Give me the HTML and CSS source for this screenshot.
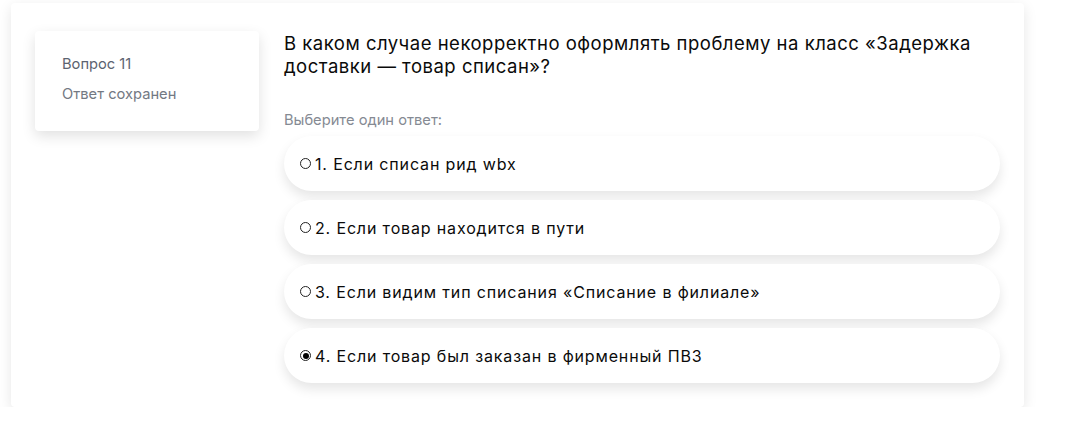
FILE: index.html
```html
<!DOCTYPE html>
<html lang="ru">
<head>
<meta charset="utf-8">
<link rel="stylesheet" href="styles.css">
</head>
<body>
<div class="page">
  <div class="card">
    <div class="info">
      <div class="info-num">Вопрос 11</div>
      <div class="info-state">Ответ сохранен</div>
    </div>
    <div class="content">
      <div class="question">В каком случае некорректно оформлять проблему на класс «Задержка доставки — товар списан»?</div>
      <div class="prompt">Выберите один ответ:</div>
      <div class="options">
        <label class="option"><span class="radio"></span><span>1. Если списан рид wbx</span></label>
        <label class="option"><span class="radio"></span><span>2. Если товар находится в пути</span></label>
        <label class="option"><span class="radio"></span><span>3. Если видим тип списания «Списание в филиале»</span></label>
        <label class="option"><span class="radio checked"></span><span>4. Если товар был заказан в фирменный ПВЗ</span></label>
      </div>
    </div>
  </div>
</div>
</body>
</html>
```
FILE: styles.css
```css
html, body {
  margin: 0;
  padding: 0;
  background: #ffffff;
  font-family: Inter, "Noto Sans", sans-serif;
  color: #000;
}
.page {
  padding: 3px 64px 0 11px;
}
.card {
  width: 1013px;
  box-sizing: border-box;
  background: #fff;
  border-radius: 4px;
  box-shadow: 0 4px 14px rgba(0, 0, 0, 0.1);
  padding: 28px 24px 24px 24px;
  display: flex;
  align-items: flex-start;
  gap: 25px;
}
.info {
  flex: 0 0 224px;
  height: 100px;
  box-sizing: border-box;
  background: #fff;
  border-radius: 4px;
  box-shadow: 0 5px 14px rgba(0, 0, 0, 0.12);
  padding: 23px 27px;
  font-size: 14.7px;
  line-height: 20px;
}
.info-num {
  color: #5c6370;
}
.info-state {
  color: #737983;
  margin-top: 10px;
}
.content {
  flex: 1;
  min-width: 0;
}
.question {
  font-size: 18.5px;
  letter-spacing: 0.5px;
  line-height: 23px;
  padding-top: 1px;
  color: #0a0a0a;
}
.prompt {
  margin-top: 32px;
  font-size: 14.7px;
  line-height: 20px;
  color: #858a93;
}
.options {
  margin-top: 6px;
  display: flex;
  flex-direction: column;
  gap: 9px;
}
.option {
  height: 55px;
  border-radius: 28px;
  background: #fff;
  box-shadow: 0 6px 12px rgba(0, 0, 0, 0.1);
  display: flex;
  align-items: center;
  gap: 4px;
  padding-left: 16px;
  font-size: 16px;
  letter-spacing: 0.85px;
  color: #0a0a0a;
}
.radio {
  width: 11px;
  height: 11px;
  border: 1px solid #222;
  border-radius: 50%;
  box-sizing: border-box;
  flex: 0 0 auto;
  position: relative;
}
.radio.checked::after {
  content: "";
  position: absolute;
  left: 1.5px;
  top: 1.5px;
  width: 6px;
  height: 6px;
  border-radius: 50%;
  background: #000;
}
```
